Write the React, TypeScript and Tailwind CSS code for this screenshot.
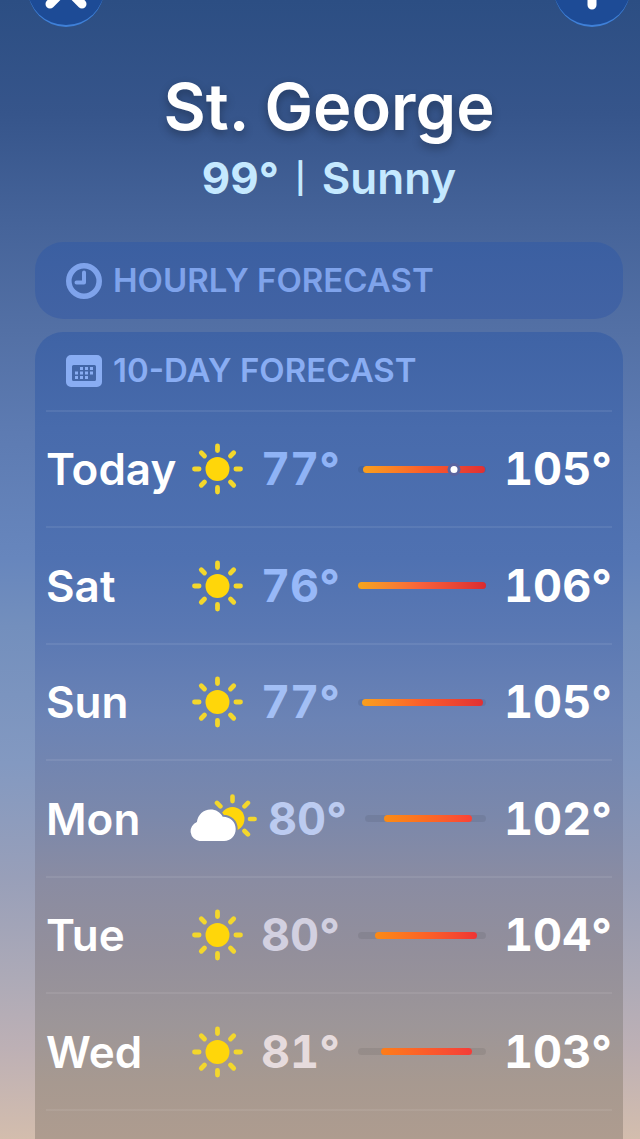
type Day = {
  name: string;
  icon: "sun" | "cloud";
  low: number;
  high: number;
  // fill position inside the track, in percent
  start: number;
  end: number;
  lowColor: string;
  fill: string;
  now?: number;
};

const days: Day[] = [
  { name: "Today", icon: "sun", low: 77, high: 105, start: 4, end: 99, lowColor: "text-[#8fb3f6]", fill: "from-[#f99f1c] via-[#fb5c2a] to-[#e03034]", now: 75 },
  { name: "Sat", icon: "sun", low: 76, high: 106, start: 0, end: 100, lowColor: "text-[#97b8f8]", fill: "from-[#f5a51b] via-[#f8603a] to-[#d92a30]" },
  { name: "Sun", icon: "sun", low: 77, high: 105, start: 3, end: 98, lowColor: "text-[#a3bff5]", fill: "from-[#f99f1c] via-[#fb5c2a] to-[#e03034]" },
  { name: "Mon", icon: "cloud", low: 80, high: 102, start: 16, end: 88, lowColor: "text-[#bccbf0]", fill: "from-[#fb8c14] via-[#fc6a22] to-[#fa4136]" },
  { name: "Tue", icon: "sun", low: 80, high: 104, start: 13, end: 93, lowColor: "text-[#d2d0e0]", fill: "from-[#fb8a14] via-[#fb6226] to-[#ef3434]" },
  { name: "Wed", icon: "sun", low: 81, high: 103, start: 18, end: 89, lowColor: "text-[#e6dbdd]", fill: "from-[#fd7d18] via-[#fc5c2a] to-[#f43c38]" },
];

function SunIcon() {
  return (
    <svg viewBox="0 0 61 54" className="h-[54px] w-[61px] shrink-0" role="img" aria-label="Sunny">
      <circle cx="27.5" cy="27" r="12" fill="#ffd60a" />
      <g stroke="#f3d72c" strokeWidth="4.8" strokeLinecap="round">
        <path d="M27.5 4v4.6M27.5 45.4V50M4.5 27h4.6M45.9 27h4.6" />
        <path d="M11.3 10.8l3.2 3.2M40.5 40l3.2 3.2M11.3 43.2l3.2-3.2M40.5 14l3.2-3.2" />
      </g>
    </svg>
  );
}

function CloudSunIcon() {
  return (
    <svg viewBox="0 0 68 54" className="h-[54px] w-[68px] shrink-0" role="img" aria-label="Partly cloudy">
      <defs>
        <mask id="cloud-gap">
          <rect width="68" height="54" fill="white" />
          <path
            d="M9.500 49a9.800 9.800 0 0 1-2.600-18.900c.8-7.300 6.600-12.600 13.600-12.600 5.400 0 9.800 2.700 12.200 7.200 7.200-.2 13 5 13 12.300 0 6.700-5 12-11.500 12z"
            fill="black"
            stroke="black"
            strokeWidth="4"
          />
        </mask>
      </defs>
      <g mask="url(#cloud-gap)">
        <circle cx="42.500" cy="27" r="12" fill="#ffd60a" />
      </g>
      <g stroke="#f3d72c" strokeWidth="4.6" strokeLinecap="round">
        <path d="M42.500 4.500v4.600M60 27h4.600M27 10.900l3.400 3.400M54.500 14.300l3.400-3.400M54.500 39l3.400 3.400" />
      </g>
      <path
        d="M9.500 49a9.800 9.800 0 0 1-2.600-18.900c.8-7.300 6.600-12.600 13.600-12.600 5.400 0 9.800 2.700 12.200 7.200 7.200-.2 13 5 13 12.300 0 6.700-5 12-11.500 12z"
        fill="white"
      />
    </svg>
  );
}

function ClockIcon() {
  return (
    <svg viewBox="0 0 36 36" className="size-9" fill="none" stroke="currentColor" aria-hidden="true">
      <circle cx="18" cy="18" r="15.200" strokeWidth="5.600" />
      <path d="M18 9.500v10h-7.500" strokeWidth="4" strokeLinecap="round" strokeLinejoin="round" />
    </svg>
  );
}

function CalendarIcon() {
  return (
    <svg viewBox="0 0 36 36" className="size-9" aria-hidden="true">
      <path
        fillRule="evenodd"
        fill="currentColor"
        d="M5 2h26a5 5 0 0 1 5 5v22a5 5 0 0 1-5 5H5a5 5 0 0 1-5-5V7a5 5 0 0 1 5-5zM7.500 12A1.500 1.500 0 0 0 6 13.500v13A1.500 1.500 0 0 0 7.500 28h21a1.500 1.500 0 0 0 1.500-1.500v-13a1.500 1.500 0 0 0-1.500-1.500z"
      />
      <path
        fill="currentColor"
        d="M14 14h3v3h-3zM19 14h3v3h-3zM24 14h3v3h-3zM9 18.500h3v3H9zM14 18.500h3v3h-3zM19 18.500h3v3h-3zM24 18.500h3v3h-3zM9 23h3v3H9zM14 23h3v3h-3zM19 23h3v3h-3z"
      />
    </svg>
  );
}

function TempBar({ day }: { day: Day }) {
  return (
    <div className="relative h-[7px] flex-1 rounded-full bg-black/7">
      <div
        className={`absolute inset-y-0 rounded-full bg-linear-to-r ${day.fill}`}
        style={{ left: `${day.start}%`, right: `${100 - day.end}%` }}
      />
      {day.now && (
        <span
          className="absolute inset-y-0 w-[7px] -translate-x-1/2 rounded-full bg-white ring-3 ring-[#5a64a0]"
          style={{ left: `${day.now}%` }}
        />
      )}
    </div>
  );
}

const roundButton =
  "-mt-[49px] flex size-[76px] items-center justify-center rounded-full border-b-2 border-[#3f80d8] bg-[#1d4b96] text-white";

export default function App() {
  return (
    <main className="flex min-h-screen flex-col overflow-hidden bg-[linear-gradient(to_bottom,#2c4e83_0%,#36558b_10%,#46649a_20%,#5370a5_29%,#5d7bb2_38%,#6786bd_49%,#738fbd_55%,#8399c1_67%,#989fb9_77%,#adaab7_86%,#bdb0b5_92%,#d3bdad_100%)] font-['Inter',sans-serif] font-semibold text-white">
      <header>
        <div className="flex justify-between pr-[10px] pl-7">
          <button type="button" aria-label="Close" className={roundButton}>
            <svg viewBox="0 0 44 44" className="size-11" stroke="currentColor" strokeWidth="9" strokeLinecap="round" aria-hidden="true">
              <path d="M6 6l32 32M38 6L6 38" />
            </svg>
          </button>
          <button type="button" aria-label="Add" className={roundButton}>
            <svg viewBox="0 0 44 44" className="size-11" stroke="currentColor" strokeWidth="9" strokeLinecap="round" aria-hidden="true">
              <path d="M22 5v34M5 22h34" />
            </svg>
          </button>
        </div>
        <div className="mt-10 pl-[18px] text-center">
          <h1 className="text-[65px] leading-20 [text-shadow:0_4px_10px_rgb(0_0_0/0.3)]">St. George</h1>
          <p className="mt-[7px] flex items-center justify-center gap-4 text-[44px] leading-12 text-[#c5e9ff]">
            <span className="font-bold tabular-nums">99°</span>
            <span className="text-[30px]">|</span>
            <span>Sunny</span>
          </p>
        </div>
      </header>

      <div className="mt-10 flex flex-1 flex-col gap-[13px] pr-[17px] pl-[35px]">
        <section className="rounded-[28px] bg-linear-to-b from-[#3b5fa1] to-[#4263a4] px-[31px]">
          <h2 className="flex h-[77px] items-center gap-[11px] text-[33px] font-semibold text-[#7fa3eb]">
            <ClockIcon />
            HOURLY FORECAST
          </h2>
        </section>

        <section className="flex-1 rounded-t-[28px] bg-[linear-gradient(to_bottom,#3f63a5_0%,#486bac_12%,#4f71b1_28%,#5a78b3_37%,#6b83b5_48%,#7b88ab_60%,#8a8ca2_68%,#938f9b_77%,#9d9698_86%,#a79990_93%,#ae9c8f_100%)]">
          <h2 className="flex h-[78px] items-center gap-[11px] px-[31px] text-[33px] font-semibold text-[#89adf3]">
            <CalendarIcon />
            10-DAY FORECAST
          </h2>
          <ul className="mx-[11px] border-t-2 border-white/8">
            {days.map((day) => (
              <li
                key={day.name}
                className="flex h-[116px] items-center border-b-2 border-white/8 text-[44px] even:h-[117px]"
              >
                <span className="w-36">{day.name}</span>
                {day.icon === "sun" ? <SunIcon /> : <CloudSunIcon />}
                <span className={`mr-[18px] ml-[10px] text-[45px] font-bold tabular-nums ${day.lowColor}`}>{day.low}°</span>
                <TempBar day={day} />
                <span className="ml-[18px] text-[45px] font-bold tabular-nums">{day.high}°</span>
              </li>
            ))}
          </ul>
        </section>
      </div>
    </main>
  );
}
